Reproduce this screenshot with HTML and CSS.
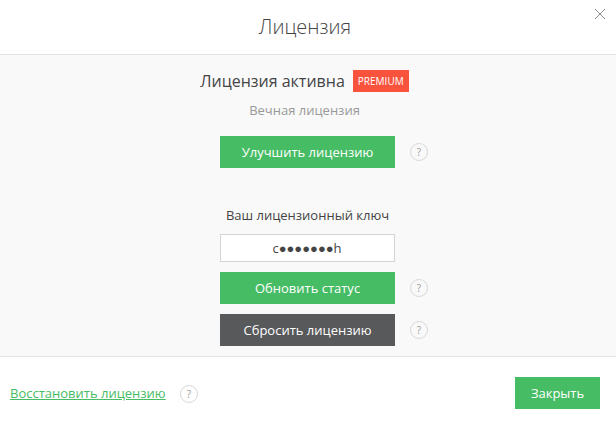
FILE: index.html
```html
<!DOCTYPE html>
<html lang="ru">
<head>
<meta charset="utf-8">
<title>Лицензия</title>
<link rel="stylesheet" href="styles.css">
</head>
<body>
<div class="dialog">
  <header class="head">
    <h1 class="title">Лицензия</h1>
    <svg class="close" width="12" height="12" viewBox="0 0 12 12"><path d="M1 1l10 10M11 1L1 11" stroke="#8a8a8a" stroke-width="1" fill="none"/></svg>
  </header>
  <main class="body">
    <div class="status"><span class="status-text">Лицензия активна</span><span class="badge">PREMIUM</span></div>
    <div class="sub">Вечная лицензия</div>
    <div class="row row-upgrade"><button class="btn green">Улучшить лицензию</button><span class="help">?</span></div>
    <div class="key-label">Ваш лицензионный ключ</div>
    <div class="row row-key"><div class="key">c●●●●●●●h</div></div>
    <div class="row row-refresh"><button class="btn green">Обновить статус</button><span class="help">?</span></div>
    <div class="row row-reset"><button class="btn dark">Сбросить лицензию</button><span class="help">?</span></div>
  </main>
  <footer class="foot">
    <a class="restore" href="#">Восстановить лицензию</a><span class="help foot-help">?</span>
    <button class="btn green close-btn">Закрыть</button>
  </footer>
</div>
</body>
</html>
```
FILE: styles.css
```css
* { box-sizing: border-box; }
html, body { margin: 0; padding: 0; background: #fff; }
body { font-family: "Open Sans", sans-serif; color: #444; overflow: hidden; }
.dialog { width: 616px; height: 421px; display: flex; flex-direction: column; }
.head { position: relative; height: 55px; border-bottom: 1px solid #e2e2e2; display: flex; align-items: center; justify-content: center; flex: none; padding-right: 6px; }
.title { margin: 0; font-size: 20px; font-weight: 300; color: #444; line-height: 54px; }
.close { position: absolute; top: 8px; right: 10px; }
.body { height: 302px; flex: none; background: #f9f9f9; border-bottom: 1px solid #e2e2e2; display: flex; flex-direction: column; align-items: center; padding-right: 1px; }
.status { margin-top: 15px; margin-right: 6px; height: 22px; display: flex; align-items: center; }
.status-text { font-size: 16px; line-height: 22px; color: #444; }
.badge { margin-left: 8px; width: 56px; height: 22px; background: #f9533e; color: #fff; font-size: 10px; font-weight: 400; line-height: 22px; text-align: center; }
.sub { margin-top: 9px; margin-right: 6px; font-size: 13px; line-height: 18px; color: #999; }
.row { position: relative; width: 175px; }
.row-upgrade { margin-top: 17px; }
.btn { display: block; border: 0; padding: 0; margin: 0; font-family: inherit; font-size: 13px; font-weight: 400; color: #fff; text-align: center; width: 175px; height: 32px; }
.green { background: #46bc64; }
.dark { background: #58595b; }
.help { position: absolute; left: 190px; top: 7px; width: 18px; height: 18px; border: 1px solid #d8d8d8; border-radius: 50%; font-size: 10px; line-height: 16px; text-align: center; color: #999; }
.key-label { margin-top: 38px; font-size: 13px; line-height: 18px; color: #444; }
.row-key { margin-top: 10px; }
.key { height: 28px; padding-right: 1px; background: #fff; border: 1px solid #d5d5d5; font-size: 13px; line-height: 26px; text-align: center; color: #444; }
.row-refresh { margin-top: 10px; }
.row-reset { margin-top: 10px; }
.foot { position: relative; flex: 1; display: flex; align-items: center; justify-content: space-between; padding: 8px 16px 0 10px; }
.restore { font-size: 13px; color: #46bc64; text-decoration: underline; }
.foot-help { left: 180px; top: 28px; }
.close-btn { width: 85px; }
```
